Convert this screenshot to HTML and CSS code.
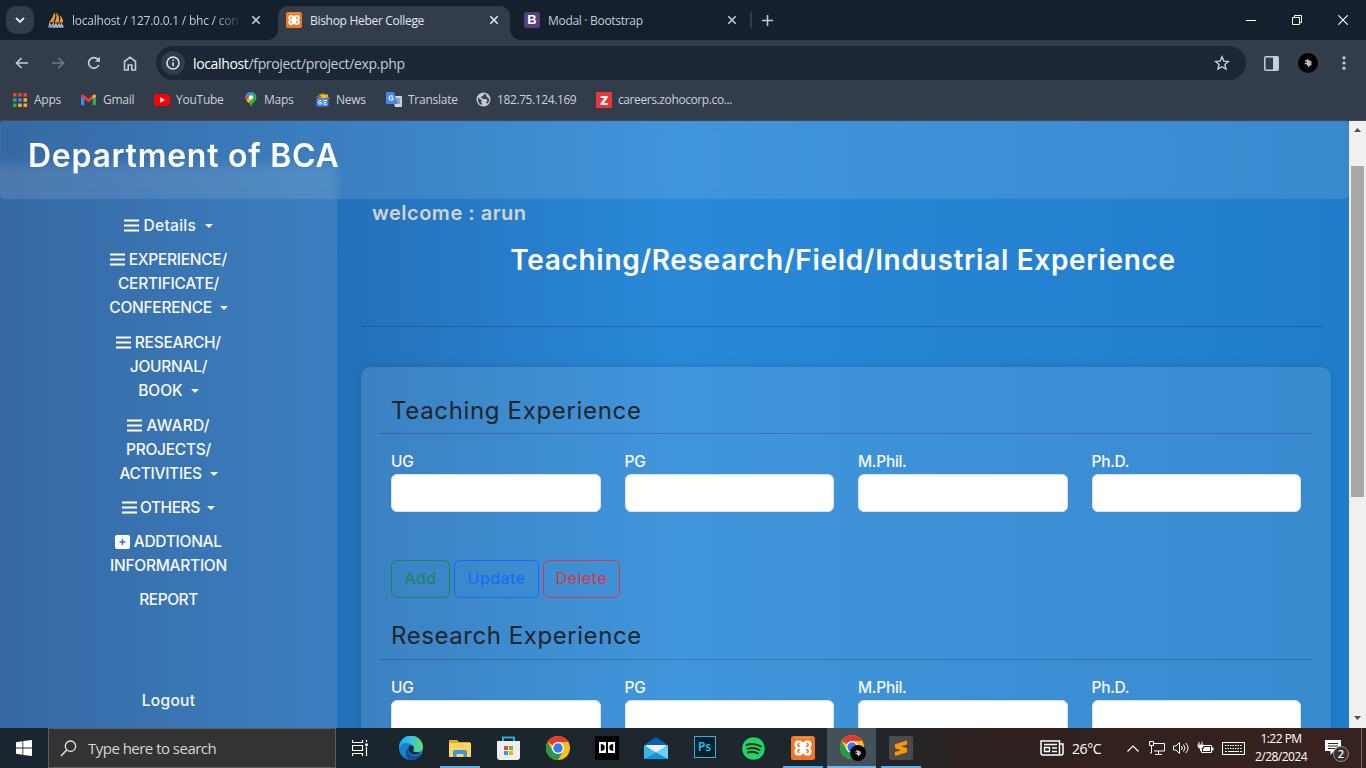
FILE: index.html
```html
<!DOCTYPE html>
<html lang="en">
<head>
<meta charset="utf-8">
<title>Bishop Heber College</title>
<link rel="stylesheet" href="styles.css">
</head>
<body>
<svg class="defs" width="0" height="0" aria-hidden="true">
  <symbol id="bars" viewBox="0 0 15 13"><path d="M0 1.5h15M0 6.5h15M0 11.5h15" stroke="#fff" stroke-width="2"/></symbol>
  <symbol id="close" viewBox="0 0 10 10"><path d="M1.3 1.3l7.4 7.4M8.7 1.3L1.3 8.7" stroke="currentColor" stroke-width="1.6"/></symbol>
  <symbol id="xampp" viewBox="0 0 24 24"><rect width="24" height="24" rx="2.5" fill="#f37623"/><path d="M4 1.800h16" stroke="#f9a66b" stroke-width="1"/><path d="M7 4.500h2.500L12 6.500l2.500-2H17q3.500 0 3.500 3.500v2L19 12l1.500 2v2q0 3.500-3.500 3.500h-2.500l-2.500-2-2.500 2H7Q3.500 19.500 3.500 16v-2L5 12l-1.500-2V8Q3.500 4.500 7 4.500z" fill="#fff"/><path d="M8.500 7.500Q6.800 7.500 6.800 9q0 1.500 2.200 1.300M15.500 7.500q1.700 0 1.700 1.500 0 1.500-2.200 1.300M8.500 16.500q-1.700 0-1.700-1.500 0-1.500 2.200-1.300M15.500 16.500q1.700 0 1.700-1.500 0-1.500-2.200-1.300" fill="none" stroke="#f37623" stroke-width="1.500"/></symbol>
  <symbol id="chrome" viewBox="0 0 24 24"><circle cx="12" cy="12" r="12" fill="#fbc116"/><path d="M12 12L1.600 6A12 12 0 0 1 22.400 6H12z" fill="#e33b2e"/><path d="M1.600 6A12 12 0 0 0 12 24l5.200-9L12 12 6.800 15z" fill="#279847"/><circle cx="12" cy="12" r="6" fill="#fff"/><circle cx="12" cy="12" r="4.700" fill="#3b7de8"/></symbol>
  <symbol id="avatar" viewBox="0 0 20 20"><circle cx="10" cy="10" r="10" fill="#000"/><path d="M7 8.500L9.500 7v5.500M6.800 10.500h2.500M10.500 7.500l2.500 1.500-1.500 1 1.500 1-2.300 2V7.500" fill="none" stroke="#c4c4c4" stroke-width="1.300"/></symbol>
</svg>

<header class="tabs">
  <div class="tab-search"><svg width="10" height="7" viewBox="0 0 10 7"><path d="M1 1l4 4 4-4" fill="none" stroke="#e4e9f0" stroke-width="1.900"/></svg></div>
  <div class="tab tab-first">
    <svg width="17" height="16" viewBox="0 0 17 16"><path d="M6 1.500Q4.500 6 1 10.500l4.500-.5Q8 5 7 1z" fill="#e8943a"/><path d="M8 .5q4.500 4 2.500 10H6.500Q9.500 6 8 .5zM12 3q3.500 4 3 7.500h-3.500Q13 7 12 3z" fill="#f59b22"/><path d="M.8 15.500l.8-4 1.800 3 2-3 .8 4 1.800-4 1.300 4 1.800-4 1.300 4 1.200-3.500 1.800 3.500M.8 15h15" fill="none" stroke="#b8bcc8" stroke-width="1.100"/></svg>
    <span class="tab-title fade">localhost / 127.0.0.1 / bhc / con</span>
    <svg class="x" width="10" height="10"><use href="#close"/></svg>
  </div>
  <div class="tab tab-active">
    <svg width="16" height="16"><use href="#xampp"/></svg>
    <span class="tab-title">Bishop Heber College</span>
    <svg class="x" width="10" height="10"><use href="#close"/></svg>
  </div>
  <div class="tab tab-last">
    <span class="bs">B</span>
    <span class="tab-title t3">Modal · Bootstrap</span>
    <svg class="x" width="10" height="10"><use href="#close"/></svg>
  </div>
  <i class="tab-sep"></i>
  <svg class="plus" width="11" height="11" viewBox="0 0 11 11"><path d="M5.500 0v11M0 5.500h11" stroke="#bcc6d4" stroke-width="1.600"/></svg>
  <div class="win">
    <svg width="10" height="10" viewBox="0 0 10 10"><path d="M0 5.500h10" stroke="#fff"/></svg>
    <svg width="10" height="10" viewBox="0 0 10 10"><path d="M.5 2.500h7v7h-7zM2.500 2V.5h7v7H8" fill="none" stroke="#fff"/></svg>
    <svg width="10" height="10" viewBox="0 0 10 10"><path d="M.2.2l9.600 9.600M9.800.2L.2 9.800" stroke="#fff" stroke-width="1.100"/></svg>
  </div>
</header>

<div class="toolbar">
  <svg width="14" height="12" viewBox="0 0 14 12"><path d="M13 6H2M6.500 1L1.500 6l5 5" fill="none" stroke="#c3ccda" stroke-width="1.600"/></svg>
  <svg width="14" height="12" viewBox="0 0 14 12"><path d="M1 6h11M7.500 1l5 5-5 5" fill="none" stroke="#727b89" stroke-width="1.600"/></svg>
  <svg width="14" height="14" viewBox="0 0 14 14"><path d="M11.800 9A5.300 5.300 0 1 1 11 3.500L12 4.600" fill="none" stroke="#c3ccda" stroke-width="1.700"/><path d="M13 .8v5H8z" fill="#c3ccda"/></svg>
  <svg width="14" height="15" viewBox="0 0 14 15"><path d="M1.500 14V5.500L7 1.200l5.500 4.300V14H8.800V9H5.200v5z" fill="none" stroke="#c3ccda" stroke-width="1.600"/></svg>
  <div class="omni">
    <span class="info"><svg width="14" height="14" viewBox="0 0 14 14"><circle cx="7" cy="7" r="6" fill="none" stroke="#e3e7ee" stroke-width="1.500"/><path d="M7 6.200v4M7 3.500v1.500" stroke="#e3e7ee" stroke-width="1.500"/></svg></span>
    <span class="url"><b>localhost</b>/fproject/project/exp.php</span>
    <svg class="star" width="16" height="16" viewBox="0 0 16 16"><path d="M8 1.800l1.800 4.300 4.600.4-3.500 3 1.100 4.600L8 11.700l-4 2.400 1.100-4.600-3.500-3 4.600-.4z" fill="none" stroke="#c9ced6" stroke-width="1.400"/></svg>
  </div>
  <svg class="panel" width="15" height="15" viewBox="0 0 15 15"><rect x=".8" y=".8" width="13.400" height="13.400" rx="1" fill="none" stroke="#c3cfe6" stroke-width="1.500"/><path d="M9 1h5v13H9z" fill="#c3cfe6"/></svg>
  <svg class="user" width="20" height="20"><use href="#avatar"/></svg>
  <svg class="dots" width="4" height="14" viewBox="0 0 4 14"><g fill="#c3ccda"><circle cx="2" cy="1.800" r="1.600"/><circle cx="2" cy="7" r="1.600"/><circle cx="2" cy="12.200" r="1.600"/></g></svg>
</div>

<nav class="bookmarks">
  <a class="b1"><svg width="14" height="14" viewBox="0 0 14 14"><g><path d="M0 0h3.500v3.500H0zM5.200 0h3.500v3.500H5.200zM10.500 0H14v3.500h-3.500z" fill="#ea4335"/><path d="M0 5.200h3.500v3.500H0zM0 10.500h3.500V14H0z" fill="#34a853"/><path d="M5.200 5.200h3.500v3.500H5.200z" fill="#2f8df5"/><path d="M10.500 5.200H14v3.500h-3.500zM5.200 10.500h3.500V14H5.200zM10.500 10.500H14V14h-3.500z" fill="#fbad14"/></g></svg><span>Apps</span></a>
  <a class="b2"><svg width="15" height="12" viewBox="0 0 15 12"><path d="M0 2v8.500q0 .8.800.8h2.500V4.500z" fill="#4285f4"/><path d="M15 2v8.500q0 .8-.8.8h-2.500V4.500z" fill="#34a853"/><path d="M0 2.500Q0 0 2 .5l5.500 4.200L13 .5q2-.5 2 2L11.700 5v0L7.500 8.200 3.300 5z" fill="#ea4335"/><path d="M11.700 1.500L13 .5q2-.5 2 2L11.700 5z" fill="#fbbc04"/></svg><span>Gmail</span></a>
  <a class="b3"><svg width="16" height="12" viewBox="0 0 16 12"><rect width="16" height="12" rx="3" fill="#f00"/><path d="M6.300 3.200v5.600L11 6z" fill="#fff"/></svg><span>YouTube</span></a>
  <a class="b4"><svg width="12" height="15" viewBox="0 0 12 15"><path d="M6 15Q5 11 2 9 0 7 .5 4 2 0 6 0q5 0 5.500 5 0 3-2.500 5Q7 12 6 15z" fill="#34a853"/><path d="M1.500 8.500L8 .4Q3-1 1 3.500-.3 6 1.500 8.500z" fill="#4285f4"/><path d="M1.500 8.500L4 5.500l4.500 0L3.500 11z" fill="#fbbc04"/><path d="M.6 3.500L3.500 5.500 1.300 8Q0 6 .6 3.500z" fill="#ea4335"/><circle cx="6" cy="5.200" r="2" fill="#fff"/></svg><span>Maps</span></a>
  <a class="b5"><svg width="15" height="14" viewBox="0 0 15 14"><path d="M2 2l7-2 1 3z" fill="#34a853"/><path d="M5 1.500h8V6H4z" fill="#fbbc04"/><path d="M0 4l5-2 2 3zM11 4l4 0-1 3z" fill="#ea4335"/><path d="M1.500 5h12v7.500q0 1-1 1h-10q-1 0-1-1z" fill="#4285f4"/><path d="M6.500 8A1.800 1.800 0 1 0 6.500 10.500V9.500H5.200M8.500 7.500h3.500M8.500 9.300h2.500M8.500 11.200h3.500" fill="none" stroke="#fff" stroke-width="1"/></svg><span>News</span></a>
  <a class="b6"><svg width="16" height="15" viewBox="0 0 16 15"><path d="M6 4h9q1 0 1 1v9q0 1-1 1H9z" fill="#d5d8dc"/><path d="M1 0h7l4 12H1q-1 0-1-1V1q0-1 1-1z" fill="#4285f4"/><path d="M7 4.500a2.300 2.300 0 1 0 0 3V6H5" fill="none" stroke="#fff" stroke-width="1.100"/><path d="M10 7h5M12.500 6v1M11 8q1 3 3.500 4M14 8q-1 3-3.500 4" fill="none" stroke="#6b7683" stroke-width=".9"/></svg><span>Translate</span></a>
  <a class="b7"><svg width="15" height="15" viewBox="0 0 15 15"><circle cx="7.500" cy="7.500" r="7" fill="#c8cacd"/><path d="M2 5.500l4 3-1 1 1.500 3.500Q2 12 2 8zM8 2l-1 2-2.500 1L7 7h3l1.500 1.500L10 11l1.500.5q2.500-2.500 1.500-5l-2-1.500-1-2.500z" fill="#3b434f"/></svg><span>182.75.124.169</span></a>
  <a class="b8"><i class="zoho">Z</i><span>careers.zohocorp.co...</span></a>
</nav>

<div class="viewport">
  <div class="page">
    <div class="topbar"><h1>Department of BCA</h1></div>
    <aside class="side">
      <ul>
        <li><span class="lower"><svg><use href="#bars"/></svg> Details <i class="caret"></i></span></li>
        <li><span><svg><use href="#bars"/></svg> EXPERIENCE/</span><br><span>CERTIFICATE/</span><br><span>CONFERENCE <i class="caret"></i></span></li>
        <li class="research"><span><svg><use href="#bars"/></svg> RESEARCH/</span><br><span>JOURNAL/</span><br><span class="book">BOOK <i class="caret"></i></span></li>
        <li><span class="award"><svg><use href="#bars"/></svg> AWARD/</span><br><span>PROJECTS/</span><br><span>ACTIVITIES <i class="caret"></i></span></li>
        <li><span class="others"><svg><use href="#bars"/></svg> OTHERS <i class="caret"></i></span></li>
        <li><span><svg class="sq" viewBox="0 0 15 14"><rect width="15" height="14" rx="2" fill="#fff"/><path d="M7.500 4v6M4.500 7h6" stroke="#3a74b4" stroke-width="1.500"/></svg> ADDTIONAL</span><br><span>INFORMARTION</span></li>
        <li><span class="report">REPORT</span></li>
        <li class="logout"><span class="lower">Logout</span></li>
      </ul>
    </aside>
    <main class="content">
      <h5>welcome : arun</h5>
      <h3><span>Teaching/Research/Field/Industrial Experience</span></h3>
      <hr class="rule">
      <section class="card">
        <h4>Teaching Experience</h4>
        <hr>
        <div class="fields">
          <label><span>UG</span><input type="text"></label>
          <label><span>PG</span><input type="text"></label>
          <label><span>M.Phil.</span><input type="text"></label>
          <label><span>Ph.D.</span><input type="text"></label>
        </div>
        <div class="buttons">
          <button class="add">Add</button><button class="update">Update</button><button class="delete">Delete</button>
        </div>
        <h4 class="second">Research Experience</h4>
        <hr>
        <div class="fields">
          <label><span>UG</span><input type="text"></label>
          <label><span>PG</span><input type="text"></label>
          <label><span>M.Phil.</span><input type="text"></label>
          <label><span>Ph.D.</span><input type="text"></label>
        </div>
      </section>
    </main>
  </div>
  <div class="scroll">
    <svg width="7" height="4" viewBox="0 0 7 4"><path d="M0 4L3.500 0 7 4z" fill="#505050"/></svg>
    <i class="thumb"></i>
    <svg class="down" width="7" height="4" viewBox="0 0 7 4"><path d="M0 0L3.500 4 7 0z" fill="#505050"/></svg>
  </div>
</div>

<footer class="taskbar">
  <div class="start"><svg width="16" height="16" viewBox="0 0 16 16"><path d="M0 2.200L6.500 1.200V7.600H0zM7.300 1L16 0v7.600H7.300zM0 8.400h6.500v6.400L0 13.800zM7.300 8.400H16V16l-8.700-1z" fill="#fff"/></svg></div>
  <div class="search"><svg width="17" height="17" viewBox="0 0 17 17"><circle cx="10.500" cy="6.200" r="5.200" fill="none" stroke="#e6e6e6" stroke-width="1.300"/><path d="M6.700 10L1 16" stroke="#e6e6e6" stroke-width="1.400"/></svg><span>Type here to search</span></div>
  <div class="slot view"><svg width="17" height="16" viewBox="0 0 17 16"><path d="M.5 0v2.500h10V0M.5 5.500h10v5H.5zM.5 16v-2.500h10V16M14.500 0v2M14.500 7v9" fill="none" stroke="#fff" stroke-width="1.200"/><path d="M13.200 3.500h2.600v2.600h-2.600z" fill="#fff"/></svg></div>
  <div class="slot"><svg width="24" height="24" viewBox="0 0 24 24"><defs><linearGradient id="eg"><stop stop-color="#20a8e0"/><stop offset=".5" stop-color="#35c3e5"/><stop offset="1" stop-color="#63df5c"/></linearGradient></defs><circle cx="12" cy="12" r="12" fill="#1482d2"/><path d="M0 12A12 12 0 0 1 24 11q0 5-6 5-4 0-4-1.500Q16 12 14 9.500 12 7 8 7 3 7 0 12z" fill="url(#eg)"/><path d="M9 12q-1 7 6 8 4 .5 7-2-4 7-11 6-5-2-4-8 .3-3 2-4z" fill="#124f99"/><path d="M10 10q-2 6 3 8 4 1.500 8-1l2-1q-2 1-5 0-4 0-4-1.500Q16 12 14 10q-2-1-4 0z" fill="#1c2730"/></svg></div>
  <div class="slot open"><svg width="22" height="19" viewBox="0 0 22 19"><path d="M0 1h8l2 2h11v6H0z" fill="#e8a825"/><path d="M0 4h22v14H0z" fill="#ffd45e"/><path d="M4 18v-5q0-2 2-2h10q2 0 2 2v5h-3.500v-3h-7v3z" fill="#3b96dc"/></svg></div>
  <div class="slot"><svg width="23" height="24" viewBox="0 0 23 24"><path d="M6 6V1.500h11V6" fill="none" stroke="#27aee5" stroke-width="2"/><path d="M0 5h23v16q0 3-3 3H3q-3 0-3-3z" fill="#eee"/><path d="M7 10h4v4H7z" fill="#e94c25"/><path d="M12 10h4v4h-4z" fill="#7ab51d"/><path d="M7 15h4v4H7z" fill="#25a0da"/><path d="M12 15h4v4h-4z" fill="#f5ad13"/></svg></div>
  <div class="slot"><svg width="24" height="24"><use href="#chrome"/></svg></div>
  <div class="slot"><svg width="24" height="24" viewBox="0 0 24 24"><path d="M0 0h24v24H0z"/><path d="M4 6h7v11H4zM13 6h7v11h-7z" fill="#fff"/><path d="M5.800 8q4 .3 4 3.500t-4 3.500zM18.200 8q-4 .3-4 3.500t4 3.500z" fill="#000"/></svg></div>
  <div class="slot"><svg width="24" height="22" viewBox="0 0 24 22"><path d="M0 8L12 0l12 8v3H0z" fill="#0863af"/><path d="M2 8h20v6l-10 3L2 14z" fill="#eee"/><path d="M0 8l12 7.500L24 8v14H0z" fill="#38b6ee"/><path d="M24 8v14L12 15.500z" fill="#69d0f6"/><path d="M0 22h24l-12-6.500z" fill="#1593dd"/></svg></div>
  <div class="slot"><span class="ps">Ps</span></div>
  <div class="slot"><svg width="23" height="23" viewBox="0 0 23 23"><circle cx="11.500" cy="11.500" r="11.300" fill="#1fd662"/><path d="M4.500 8q7.500-2.500 14.500 1.500M5.500 11.800q6.500-2 12 1.200M6 15.500q5.500-1.800 10 1" fill="none" stroke="#14291d" stroke-width="1.900" stroke-linecap="round"/></svg></div>
  <div class="slot open"><svg width="24" height="24"><use href="#xampp"/></svg></div>
  <div class="slot active"><svg width="26" height="26" viewBox="0 0 26 26"><use href="#chrome" width="24" height="24"/><use href="#avatar" x="10" y="10" width="16" height="16"/></svg></div>
  <div class="slot open"><svg width="24" height="24" viewBox="0 0 24 24"><rect width="24" height="24" rx="2" fill="#4b4b4b"/><path d="M18 4.500L6 8.200v4l6 2-6 1.800v4l12-3.700v-4l-6-2 6-1.800z" fill="#ff9800"/></svg></div>
  <div class="tray">
    <svg class="paper" width="24" height="16" viewBox="0 0 24 16"><path d="M1 1h18.500v14H3q-2 0-2-2zM19.500 4H23v9q0 2-2 2h-2" fill="none" stroke="#fff" stroke-width="1.500"/><path d="M4 4.500h13M12 8h5M12 11.500h5" stroke="#fff" stroke-width="1.300"/><path d="M4.500 7.500h5v4h-5z" fill="none" stroke="#fff" stroke-width="1.300"/></svg>
    <span class="temp">26°C</span>
    <svg class="up" width="12" height="7" viewBox="0 0 12 7"><path d="M.5 6.500L6 1l5.500 5.500" fill="none" stroke="#fff" stroke-width="1.200"/></svg>
    <svg class="net" width="16" height="14" viewBox="0 0 16 14"><path d="M4 2.500h11.500v7.500H5M9.500 10v3M6 13.500h7M.5.500h4v4h-4zM2.500 4.500v7.500H1" fill="none" stroke="#fff"/></svg>
    <svg class="vol" width="17" height="14" viewBox="0 0 17 14"><path d="M.5 5v4H3l3.500 3.500v-11L3 5z" fill="none" stroke="#fff"/><path d="M8.500 5q1.500 2 0 4M10.500 3.500q3 3.500 0 7M12.800 2q4.500 5 0 10" fill="none" stroke="#fff"/></svg>
    <svg class="bat" width="17" height="13" viewBox="0 0 17 13"><path d="M6 3.500h8.500v7H4.500V7M2 0v2.500M5 0v2.500" fill="none" stroke="#fff"/><path d="M.5 2.500h6V4L5 6.500H4V9H3V6.500H2L.5 4z" fill="#fff"/><path d="M7.500 5H13v4H6V7.500zM15 5.500h1.500v3H15z" fill="#fff"/></svg>
    <svg class="kb" width="23" height="13" viewBox="0 0 23 13"><path d="M.5.500h22v12H.5z" fill="none" stroke="#fff"/><path d="M3 3.500h17M3 6.500h17" stroke="#fff" stroke-width="1.200" stroke-dasharray="1.500 1"/><path d="M3 9.500h2M6 9.500h11M18 9.500h2" stroke="#fff"/></svg>
    <div class="clock"><span>1:22 PM</span><span>2/28/2024</span></div>
    <div class="note"><svg width="16" height="15" viewBox="0 0 16 15"><path d="M0 0h16v11H9l-3.500 4v-4H0z" fill="#fff"/><path d="M3 3.500h10M3 6h10M3 8.500h7" stroke="#38221f"/></svg><span>2</span></div>
    <i class="peek"></i>
  </div>
</footer>
</body>
</html>
```

FILE: styles.css
```css
* { box-sizing: border-box; }
body { margin: 0; width: 1366px; height: 768px; overflow: hidden; display: flex; flex-direction: column; background: #323c4b; font-family: "Open Sans", "Noto Sans", sans-serif; }
svg { display: block; flex: none; }
.defs { position: absolute; }
i { font-style: normal; }
h1, h3, h4, h5, ul { margin: 0; padding: 0; list-style: none; }

/* Browser tabs */
.tabs { height: 40px; flex: none; background: #15202d; display: flex; align-items: center; color: #c3ccda; font-size: 12px; }
.tab-search { width: 28px; height: 28px; margin-left: 6px; border-radius: 10px; background: #323c4b; display: grid; place-items: center; }
.tab { position: relative; display: flex; align-items: center; height: 34px; align-self: flex-end; padding-bottom: 6px; padding-top: 0; white-space: nowrap; }
.tab-first { width: 244px; padding-left: 14px; }
.tab-title { margin-left: 8px; letter-spacing: -0.3px; }
.fade { width: 172px; margin-left: 7px; letter-spacing: -.22px; -webkit-mask-image: linear-gradient(90deg, #000 82%, transparent 99%); mask-image: linear-gradient(90deg, #000 82%, transparent 99%); }
.tab .x { margin-left: auto; }
.tab-first .x { margin-right: 17px; }
.tab-active { width: 232px; padding: 0 11px 6px 8px; background: #323c4b; border-radius: 10px 10px 0 0; color: #e3e7ee; }
.tab-active::before, .tab-active::after { content: ""; position: absolute; bottom: 0; width: 10px; height: 10px; }
.tab-active::before { left: -10px; background: radial-gradient(circle at 0 0, transparent 9.5px, #323c4b 10px); }
.tab-active::after { right: -10px; background: radial-gradient(circle at 100% 0, transparent 9.5px, #323c4b 10px); }
.tab-last { width: 228px; padding-left: 14px; }
.bs { width: 16px; height: 16px; border-radius: 3px; background: #563d7c; color: #fff; font: 700 13px/16px "Liberation Sans", sans-serif; text-align: center; }
.tab-last .x { margin-right: 1px; }
.tab-sep { width: 2px; height: 16px; margin-left: 12px; background: #323c4b; }
.plus { margin-left: 10px; }
.win { margin-left: auto; display: flex; gap: 36px; padding-right: 18px; }

/* Address bar */
.toolbar { height: 46px; flex: none; display: flex; align-items: center; padding: 0 0 0 15px; gap: 22px; }
.omni { width: 1090px; height: 34px; margin-left: -3px; border-radius: 17px; background: #1c2736; display: flex; align-items: center; padding-left: 5px; }
.info { width: 24px; height: 24px; border-radius: 50%; background: #323c4b; display: grid; place-items: center; }
.url { margin-left: 8px; font-size: 14px; letter-spacing: -0.35px; color: #c7cbd2; }
.url b { font-weight: 400; color: #fff; }
.star { margin-left: auto; margin-right: 16px; }
.panel { margin-left: -4px; }
.user { margin-left: -3px; }
.dots { margin-left: 2px; }

/* Bookmarks */
.bookmarks { height: 35px; flex: none; display: flex; align-items: center; padding: 0 0 7px 13px; border-bottom: 1px solid #47494e; font-size: 12px; letter-spacing: -0.25px; color: #cdd1d8; white-space: nowrap; }
.bookmarks a { display: flex; align-items: center; gap: 6px; }
.bookmarks .b1, .bookmarks .b2, .bookmarks .b4 { gap: 7px; }
.b1 { width: 68px; } .b2 { width: 73px; } .b3 { width: 91px; } .b4 { width: 70px; } .b5 { width: 71px; } .b6 { width: 90px; } .b7 { width: 120px; }
.b7 span { letter-spacing: -.4px; }
.b8 span { letter-spacing: -.4px; }
.zoho { width: 16px; height: 16px; background: #e8373a; color: #fff; font: 800 13px/16px "Open Sans", sans-serif; text-align: center; }

/* Page */
.viewport { flex: 1; min-height: 0; display: flex; font-family: Inter, "Open Sans", sans-serif; }
.page { width: 1349px; overflow: hidden; display: grid; grid-template: 78px 1fr / 337px 1fr; background: linear-gradient(90deg, #1e5799 0%, #2989d8 50%, #207cca 100%); }
.topbar { grid-area: 1 / 1 / 2 / 3; z-index: 1; background: rgba(255,255,255,.11); backdrop-filter: blur(5px); border-radius: 5px; border: 1px solid rgba(70,120,205,.35); padding: 15px 27px; }
h1 { font-size: 32px; line-height: 38px; font-weight: 600; color: #fff; letter-spacing: .73px; white-space: nowrap; }
.side { grid-area: 1 / 1 / 3 / 2; margin-top: 44px; background: rgba(255,255,255,.11); text-align: center; color: #f8f9fa; font-size: 15.5px; font-weight: 500; line-height: 24px; letter-spacing: -.28px; padding-top: 44px; }
.side li { padding: 5px 0; white-space: nowrap; }
.side .research { padding: 6px 0; }
.side svg { display: inline-block; width: 15px; height: 13px; vertical-align: -1px; margin-right: -.3px; }
.side svg.sq { height: 14px; vertical-align: -1.5px; }
.side .lower { letter-spacing: .3px; }
.side .award { letter-spacing: .2px; }
.side .book { letter-spacing: 0; }
.side .report, .side .others { letter-spacing: -.45px; }
.caret { display: inline-block; border: 4px solid transparent; border-top-color: currentColor; border-bottom: 0; vertical-align: 3px; margin-left: 4px; }
.side .logout { margin-top: 67px; }
.content { grid-area: 2 / 2; min-width: 0; padding: 0 18px 0 24px; }
h5 { font-size: 20px; line-height: 24px; font-weight: 600; color: #d3d3d3; padding: 2px 0 0 11px; letter-spacing: .5px; white-space: nowrap; }
h3 { font-size: 28px; line-height: 34px; font-weight: 600; color: #fff; text-align: center; margin: 18px 6px 0 0; letter-spacing: .69px; white-space: nowrap; }
hr { border: 0; height: 1px; margin: 0; background: rgba(33,37,41,.28); }
.rule { margin: 49px 6px 40px 0; }
.card { width: 970px; height: 500px; border-radius: 10px; background: rgba(255,255,255,.11); box-shadow: 0 0 10px rgba(0,0,0,.13); padding: 26px 18px; }
h4 { padding-left: 12px; font-size: 24px; line-height: 36px; font-weight: 400; color: #212529; height: 40px; letter-spacing: .66px; white-space: nowrap; }
.second { line-height: 34px; letter-spacing: .56px; }
.fields { display: grid; grid-template-columns: repeat(4, 209.5px); gap: 24px; padding: 16px 12px 0; }
label { display: block; color: #f8f9fa; font-size: 15.5px; line-height: 24px; font-weight: 500; letter-spacing: -.3px; }
label span { display: block; }
input { display: block; width: 100%; height: 38px; border: 1px solid #dee2e6; border-radius: 6px; background: #fff; }
.buttons { display: flex; gap: 4px; padding: 48px 12px 0; margin-bottom: 21px; }
button { height: 38px; border: 1px solid; border-radius: 6px; background: none; padding: 0 0 2px; font: 400 16px/24px Inter, sans-serif; letter-spacing: .5px; }
.add { width: 59px; color: #198754; } .update { width: 85px; color: #0d6efd; } .delete { width: 77px; color: #dc3545; }
.scroll { width: 17px; background: #f0f0f0; display: flex; flex-direction: column; align-items: center; padding: 7px 0 8px; }
.thumb { width: 13px; height: 331px; margin-top: 34px; background: #a8a8a8; }
.down { margin-top: auto; }

/* Taskbar */
.taskbar { height: 40px; flex: none; display: flex; background: linear-gradient(90deg, #1b2530 0, #1b252c 450px, #1e272d 850px, #2e211f 980px, #38221f 1366px); }
.start { width: 48px; display: grid; place-items: center; }
.search { width: 288px; background: #333; border: 1px solid #5d5d5d; display: flex; align-items: center; padding-left: 11px; color: #d6d6d6; font-size: 15px; }
.search span { margin-left: 11px; letter-spacing: -.52px; white-space: nowrap; }
.slot { width: 49px; flex: none; display: grid; place-items: center; }
.view { width: 50px; padding-right: 1px; }
.open { background: linear-gradient(#62aee8, #62aee8) center bottom / 40px 2px no-repeat; }
.active { background: #455158; border-bottom: 2px solid #70b7ed; padding: 2px 0 0 2px; }
.ps { width: 22px; height: 22px; margin-bottom: 2px; border: 1.5px solid #25b5df; background: #07202b; color: #25c9f5; font-size: 12px; line-height: 19px; text-align: center; font-weight: 600; }
.tray { margin-left: auto; width: 327px; display: flex; align-items: center; color: #fff; }
.paper { margin-left: 1px; }
.temp { width: 46px; margin-left: 8px; font-size: 14px; letter-spacing: -.4px; }
.up { margin-left: 9px; } .net { margin-left: 10px; } .vol { margin-left: 8px; } .bat { margin-left: 7px; } .kb { margin-left: 8px; }
.clock { width: 56px; margin-left: 8px; font-size: 12px; line-height: 18px; display: flex; flex-direction: column; align-items: center; white-space: nowrap; letter-spacing: -.52px; }
.note { position: relative; width: 26px; height: 24px; margin-left: 16px; padding-top: 4px; }
.note span { position: absolute; left: 8px; top: 10px; width: 16px; height: 16px; border: 1px solid #92908f; border-radius: 50%; background: #353232; font: 600 11px/14px "Open Sans", sans-serif; text-align: center; }
.peek { width: 1px; height: 40px; margin-left: auto; margin-right: 4px; background: #756866; }
```
